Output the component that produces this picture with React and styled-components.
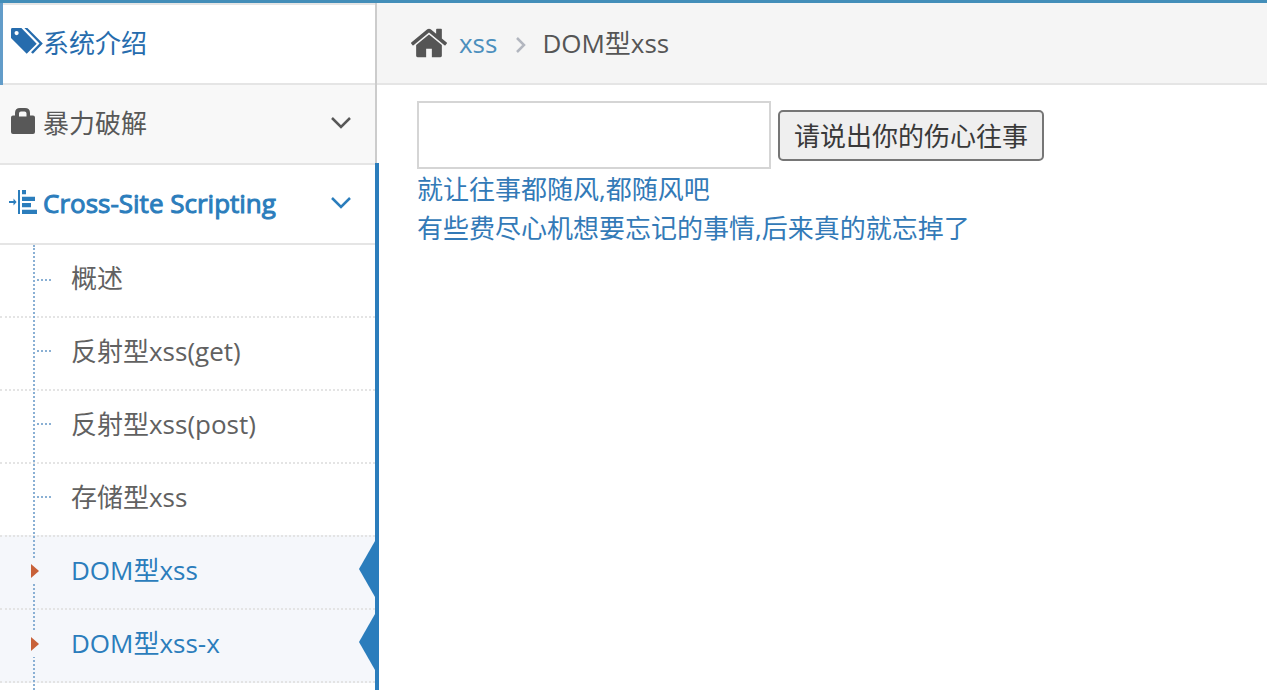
import React from 'react';
import styled, { createGlobalStyle } from 'styled-components';

const GlobalStyle = createGlobalStyle`
	*, *::before, *::after{
		box-sizing: border-box;
	}
	body{
		margin: 0;
		background: #fff;
		color: #393939;
		font-family: "Open Sans", "Noto Sans CJK SC", sans-serif;
		font-size: 26px;
		line-height: 39px;
	}
	a{
		text-decoration: none;
	}
`;

const subItems = [
	{ text: '概述' },
	{ text: '反射型xss(get)' },
	{ text: '反射型xss(post)' },
	{ text: '存储型xss' },
	{ text: 'DOM型xss', active: true },
	{ text: 'DOM型xss-x', active: true },
];

const TagsIcon = () => (
	<MenuIcon viewBox="0 0 34 32" aria-hidden="true">
		<path
			fillRule="evenodd"
			d="M2 2.4Q2 1 3.400 1H12.400L27.700 16.700L17.700 26.700L2 11ZM7.600 4A2.100 2.100 0 1 0 7.600 8.200A2.100 2.100 0 1 0 7.600 4Z"
		/>
		<path d="M15.400 1H18.400L33.800 16.400L23.900 26.700L22 25.200L30.500 16.400Z" />
	</MenuIcon>
);

const LockIcon = () => (
	<MenuIcon viewBox="0 0 34 32" aria-hidden="true">
		<path
			fillRule="evenodd"
			d="M6 8.500V6Q6 1 11 1H16Q21 1 21 6V8.500H24Q26 8.500 26 10.500V25Q26 27 24 27H4Q2 27 2 25V10.500Q2 8.500 4 8.500ZM10 9.500H17.500V6.500Q17.500 4.500 15.500 4.500H12Q10 4.500 10 6.500Z"
		/>
	</MenuIcon>
);

const IndentIcon = () => (
	<MenuIcon viewBox="0 0 34 32" aria-hidden="true">
		<path d="M9 3h2v24H9zM13 3h4v4.300h-4zM13 9.700h13v4.300H13zM13 16h9v4.300h-9zM13 22.700h15v4.300H13z" />
		<path d="M0 14h4.500v-2.600L7.600 15l-3.100 3.600V16H0z" />
	</MenuIcon>
);

const HomeIcon = () => (
	<HomeSvg viewBox="0 0 1792 1792" aria-hidden="true">
		<path d="M1472 992v480q0 26-19 45t-45 19h-384v-384h-256v384h-384q-26 0-45-19t-19-45v-480q0-1 .5-3t.5-3l575-474 575 474q1 2 1 6zm223-69l-62 74q-8 9-21 11h-3q-13 0-21-7l-692-577-692 577q-12 8-24 7-13-2-21-11l-62-74q-8-10-7-23.5t11-21.5l719-599q32-26 76-26t76 26l244 204v-195q0-14 9-23t23-9h192q14 0 23 9t9 23v408l219 182q10 8 11 21.5t-7 23.5z" />
	</HomeSvg>
);

const ArrowDown = () => (
	<ArrowSvg viewBox="0 0 22 14" aria-hidden="true">
		<path d="M2 2l9 9 9-9" />
	</ArrowSvg>
);

const App = () => {
	return (
		<>
			<GlobalStyle />
			<Page>
				<Sidebar>
					<MenuList>
						<MenuItem>
							<MenuLink href="#intro" $hover>
								<TagsIcon />
								<MenuText>系统介绍</MenuText>
							</MenuLink>
						</MenuItem>
						<MenuItem>
							<MenuLink href="#burteforce">
								<LockIcon />
								<MenuText>暴力破解</MenuText>
								<ArrowDown />
							</MenuLink>
						</MenuItem>
						<MenuItem $open>
							<MenuLink href="#xss" $open>
								<IndentIcon />
								<MenuText $strong>Cross-Site Scripting</MenuText>
								<ArrowDown />
							</MenuLink>
							<SubMenu>
								{subItems.map(({ text, active }) => (
									<SubItem key={text} $active={active}>
										<SubLink href="#xss" $active={active}>
											{active && (
												<Caret viewBox="0 0 12 26" aria-hidden="true">
													<path d="M2 6l8 7-8 7z" />
												</Caret>
											)}
											{text}
										</SubLink>
									</SubItem>
								))}
							</SubMenu>
						</MenuItem>
					</MenuList>
				</Sidebar>
				<Main>
					<Breadcrumbs aria-label="breadcrumb">
						<HomeIcon />
						<CrumbLink href="#xss">xss</CrumbLink>
						<Separator viewBox="0 0 12 20" aria-hidden="true">
							<path d="M2 3l7 7-7 7" />
						</Separator>
						<span>DOM型xss</span>
					</Breadcrumbs>
					<Content>
						<Form onSubmit={(e) => e.preventDefault()}>
							<TextInput type="text" aria-label="text" />
							<Button type="submit">请说出你的伤心往事</Button>
						</Form>
						<ResultLink href="#one">就让往事都随风,都随风吧</ResultLink>
						<ResultLink href="#two">有些费尽心机想要忘记的事情,后来真的就忘掉了</ResultLink>
					</Content>
				</Main>
			</Page>
		</>
	);
};

const Page = styled.div`
	display: flex;
	min-height: 100vh;
	border-top: 3px solid #438eb9;
`;

const Sidebar = styled.nav`
	display: flex;
	flex: 0 0 377px;
	border-right: 2px solid #ccc;
`;

const MenuList = styled.ul`
	display: flex;
	flex-direction: column;
	flex: 1;
	margin: 0;
	padding: 0;
	list-style: none;
	border-top: 2px solid #e5e5e5;
`;

const MenuItem = styled.li`
	position: relative;
	display: flex;
	flex-direction: column;
	flex: ${({ $open }) => ($open ? '1' : 'none')};

	${({ $open }) => $open && `
		&::after{
			content: "";
			position: absolute;
			top: -2px;
			bottom: 0;
			right: -4px;
			width: 4px;
			background: #2b7dbc;
		}
	`}
`;

const MenuLink = styled.a`
	position: relative;
	display: flex;
	align-items: center;
	height: 80px;
	padding: 0 23px 2px 9px;
	border-bottom: 2px solid #e5e5e5;
	background: ${({ $hover, $open }) => ($hover || $open ? '#fff' : '#f8f8f8')};
	color: ${({ $hover, $open }) => ($hover ? '#266cad' : $open ? '#2b7dbc' : '#585858')};

	${({ $hover }) => $hover && `
		&::before{
			content: "";
			position: absolute;
			top: -2px;
			bottom: -2px;
			left: 0;
			width: 3px;
			background: #629cc9;
		}
	`}
`;

const MenuIcon = styled.svg`
	flex: none;
	width: 34px;
	height: 32px;
	fill: currentColor;
`;

const MenuText = styled.span`
	flex: 1;
	white-space: nowrap;
	-webkit-text-stroke: ${({ $strong }) => ($strong ? '1px currentColor' : '0')};
`;

const ArrowSvg = styled.svg`
	width: 22px;
	height: 14px;
	fill: none;
	stroke: currentColor;
	stroke-width: 2.5;
`;

const SubMenu = styled.ul`
	position: relative;
	flex: 1;
	margin: 0;
	padding: 0;
	list-style: none;

	&::before{
		content: "";
		position: absolute;
		z-index: 1;
		top: 0;
		bottom: 0;
		left: 33px;
		border-left: 2px dotted #8ab0d4;
	}
`;

const SubItem = styled.li`
	position: relative;
	border-top: 2px dotted #e4e4e4;
	background: ${({ $active }) => ($active ? '#f5f7fb' : '#fff')};

	&::before{
		content: "";
		display: ${({ $active }) => ($active ? 'none' : 'block')};
		position: absolute;
		top: 32px;
		left: 37px;
		width: 14px;
		border-top: 2px dotted #8ab0d4;
	}

	&::after{
		content: "";
		display: ${({ $active }) => ($active ? 'block' : 'none')};
		position: absolute;
		top: 4px;
		right: 0;
		border: solid transparent;
		border-width: 28px 16px 28px 0;
		border-right-color: #2b7dbc;
	}

	&:first-child{
		border-top: none;

		&::before{
			top: 34px;
		}
	}

	&:last-child{
		border-bottom: 2px dotted #e4e4e4;
	}
`;

const SubLink = styled.a`
	display: flex;
	align-items: center;
	height: 71px;
	padding: 0 0 4px 71px;
	color: ${({ $active }) => ($active ? '#2b7dbc' : '#616161')};
`;

const Caret = styled.svg`
	position: absolute;
	z-index: 2;
	left: 29px;
	width: 12px;
	height: 26px;
	background: #f5f7fb;
	fill: #c86139;
`;

const Main = styled.main`
	flex: 1;
	min-width: 0;
`;

const Breadcrumbs = styled.nav`
	display: flex;
	align-items: center;
	height: 82px;
	padding-left: 32px;
	border-bottom: 2px solid #e5e5e5;
	background: #f5f5f5;
	color: #555;
`;

const HomeSvg = styled.svg`
	width: 40px;
	height: 40px;
	margin-right: 10px;
	fill: currentColor;
`;

const CrumbLink = styled.a`
	color: #4c8fbd;
`;

const Separator = styled.svg`
	width: 12px;
	height: 20px;
	margin: 4px 15px 0 18px;
	fill: none;
	stroke: #b2b6bf;
	stroke-width: 2.5;
`;

const Content = styled.div`
	padding: 16px 40px;
`;

const Form = styled.form`
	display: flex;
	align-items: center;
	gap: 7px;
	margin-bottom: 1px;
`;

const TextInput = styled.input`
	width: 354px;
	height: 68px;
	padding: 10px 8px;
	border: 2px solid #d5d5d5;
	border-radius: 0;
	background: #fff;
	color: #858585;
	font: inherit;
`;

const Button = styled.button`
	height: 51px;
	padding: 2px 14px 0;
	border: 2px solid #767676;
	border-radius: 5px;
	background: #efefef;
	color: #393939;
	font: inherit;
	white-space: nowrap;
`;

const ResultLink = styled.a`
	display: block;
	color: #337ab7;
`;

export default App;
